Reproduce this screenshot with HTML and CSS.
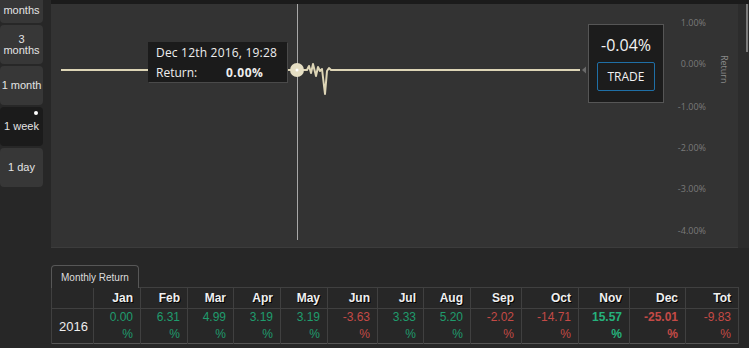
FILE: index.html
```html
<!DOCTYPE html>
<html lang="en">
<head>
  <meta charset="UTF-8">
  <title>Strategy Returns</title>
  <link rel="stylesheet" href="styles.css">
</head>
<body>

  <!-- Chart row: range buttons + chart panel -->
  <div class="top-row">
    <aside class="ranges">
      <div class="range-list">
        <button class="range-btn clipped">6<br>months</button>
        <button class="range-btn">3<br>months</button>
        <button class="range-btn">1 month</button>
        <button class="range-btn active">1 week</button>
        <button class="range-btn">1 day</button>
      </div>
    </aside>

    <div class="chart-area">
      <div class="chart-panel">
        <svg class="chart-svg" viewBox="51 4 687 244" width="687" height="244">
          <!-- crosshair -->
          <line x1="297.5" y1="4" x2="297.5" y2="240" stroke="#a8a8a8" stroke-width="1"/>
          <!-- return line -->
          <path d="M61 70 L307 70 L309 66 L311 73 L313 64 L316 76 L318 67 L320 71 L322 69 L325 94 L327 71 L329 68 L331 70 L580 70"
                fill="none" stroke="#ddd5b6" stroke-width="2" stroke-linejoin="round"/>
          <circle cx="297" cy="70" r="7" fill="#e6dfc4"/>
          <circle cx="297" cy="70" r="1.5" fill="#fff"/>
          <!-- last value marker -->
          <polygon points="582,70 586,66.5 586,73.5" fill="#6a6a6a"/>
          <!-- y axis -->
          <g class="axis-labels">
            <text x="706" y="26">1.00%</text>
            <text x="706" y="67">0.00%</text>
            <text x="706" y="110">-1.00%</text>
            <text x="706" y="151">-2.00%</text>
            <text x="706" y="192">-3.00%</text>
            <text x="706" y="234">-4.00%</text>
          </g>
          <text class="axis-title" transform="translate(721 55) rotate(90)">Return</text>
        </svg>

        <div class="chart-tooltip">
          <div class="tip-date">Dec 12th 2016, 19:28</div>
          <div class="tip-row"><span>Return:</span><b>0.00%</b></div>
        </div>

        <div class="price-box">
          <div class="price-value">-0.04%</div>
          <button class="trade-btn">TRADE</button>
        </div>
      </div>
      <div class="scroll-gutter"><div class="scroll-thumb"></div></div>
    </div>
  </div>

  <!-- Monthly return table -->
  <div class="returns">
    <div class="tabs">
      <div class="tab">Monthly Return</div>
    </div>
    <table class="returns-table">
      <colgroup>
        <col style="width:42px"><col style="width:47px"><col style="width:47px"><col style="width:46px">
        <col style="width:47px"><col style="width:47px"><col style="width:50px"><col style="width:46px">
        <col style="width:47px"><col style="width:51px"><col style="width:57px"><col style="width:51px">
        <col style="width:56px"><col style="width:53px">
      </colgroup>
      <thead>
        <tr>
          <th></th><th>Jan</th><th>Feb</th><th>Mar</th><th>Apr</th><th>May</th><th>Jun</th>
          <th>Jul</th><th>Aug</th><th>Sep</th><th>Oct</th><th>Nov</th><th>Dec</th><th>Tot</th>
        </tr>
      </thead>
      <tbody>
        <tr>
          <td class="year">2016</td>
          <td class="pos">0.00<br>%</td>
          <td class="pos">6.31<br>%</td>
          <td class="pos">4.99<br>%</td>
          <td class="pos">3.19<br>%</td>
          <td class="pos">3.19<br>%</td>
          <td class="neg">-3.63<br>%</td>
          <td class="pos">3.33<br>%</td>
          <td class="pos">5.20<br>%</td>
          <td class="neg">-2.02<br>%</td>
          <td class="neg">-14.71<br>%</td>
          <td class="pos best">15.57<br>%</td>
          <td class="neg worst">-25.01<br>%</td>
          <td class="neg">-9.83<br>%</td>
        </tr>
      </tbody>
    </table>
  </div>

</body>
</html>
```

FILE: styles.css
```css
/* Page */
body {
  margin: 0;
  background-color: #272727;
  font-family: "Liberation Sans", Arial, sans-serif;
  color: #e6e6e6;
  overflow: hidden;
}

/* Top row: range buttons and chart */
.top-row {
  display: flex;
  height: 248px;
}

.ranges {
  width: 43px;
  margin-right: 8px;
  overflow: hidden;
}

.range-list {
  display: flex;
  flex-direction: column;
  gap: 2px;
  margin-top: -16px;
}

.range-btn {
  height: 39px;
  padding: 0;
  border: none;
  border-radius: 4px;
  background-color: #373737;
  color: #e4e4e4;
  font-family: "Liberation Sans", Arial, sans-serif;
  font-size: 11px;
  line-height: 11px;
  position: relative;
}

/* first button is scrolled half out of view */
.range-btn.clipped {
  line-height: 16px;
  padding-bottom: 4px;
}

.range-btn.active {
  background-color: #1b1b1b;
}

.range-btn.active::after {
  content: "";
  position: absolute;
  top: 4px;
  right: 5px;
  width: 4px;
  height: 4px;
  border-radius: 50%;
  background-color: #fff;
}

/* Chart */
.chart-area {
  flex: 1;
  display: flex;
  border-top: 4px solid #1b1b1b;
}

.chart-panel {
  position: relative;
  width: 687px;
  height: 244px;
  background-color: #333333;
  box-shadow: inset 0 -1px 0 #3c3c3c;
}

.chart-svg {
  display: block;
}

.axis-labels text {
  font-family: "Open Sans", sans-serif;
  font-size: 9px;
  fill: #7a7a7a;
  text-anchor: end;
}

.axis-title {
  font-family: "Open Sans", sans-serif;
  font-size: 9px;
  fill: #8a8a8a;
}

.scroll-gutter {
  flex: 1;
  background-color: #2c2c2c;
  display: flex;
  justify-content: flex-end;
  padding-right: 1px;
}

.scroll-thumb {
  width: 2px;
  height: 48px;
  background-color: #7c7c7c;
}

/* Tooltip over the crosshair */
.chart-tooltip {
  position: absolute;
  left: 97px;
  top: 38px;
  width: 131px;
  height: 39px;
  padding: 1px 0 0 8px;
  background-color: #1b1b1b;
  box-shadow: 1px 1px 0 #4a4a4a;
  font-family: "Open Sans", sans-serif;
  font-size: 12px;
  color: #eee;
}

.tip-date {
  line-height: 19px;
  letter-spacing: 0.2px;
}

.tip-row {
  display: flex;
  line-height: 21px;
}

.tip-row span {
  width: 70px;
}

.tip-row b {
  font-weight: bold;
  letter-spacing: 0.5px;
}

/* Current value box */
.price-box {
  position: absolute;
  left: 537px;
  top: 20px;
  width: 74px;
  height: 77px;
  border: 1px solid #565656;
  background-color: #1c1c1c;
  display: flex;
  flex-direction: column;
  align-items: center;
}

.price-value {
  margin-top: 9px;
  font-family: "Open Sans", sans-serif;
  font-size: 16px;
  color: #f2f2f2;
}

.trade-btn {
  margin-top: 6px;
  width: 58px;
  height: 29px;
  padding: 0;
  border: 1px solid #1f6fa6;
  border-radius: 2px;
  background-color: #1c1c1c;
  color: #f2f2f2;
  font-family: "Open Sans", sans-serif;
  font-size: 12px;
}

/* Monthly returns */
.returns {
  margin: 17px 0 0 51px;
  width: 687px;
}

.tabs {
  display: flex;
}

.tab {
  height: 22px;
  padding: 0 9px;
  margin-bottom: -1px;
  border: 1px solid #575757;
  border-bottom: none;
  border-radius: 4px 4px 0 0;
  background-color: #272727;
  font-size: 10px;
  line-height: 23px;
  color: #ddd;
  position: relative;
}

.returns-table {
  width: 687px;
  table-layout: fixed;
  border-collapse: collapse;
  border: 1px solid #575757;
}

.returns-table th,
.returns-table td {
  border: 1px solid #404040;
  text-align: right;
  padding: 0 7px 0 0;
  font-size: 12px;
}

.returns-table th {
  height: 20px;
  font-weight: bold;
  color: #f0f0f0;
  text-shadow: 1px 1px 0 #000;
}

.returns-table td {
  height: 34px;
  line-height: 17px;
  border-bottom: 1px dotted #6a6a6a;
}

.returns-table td.year {
  text-align: center;
  padding: 0 0 0 2px;
  font-size: 13px;
  color: #eee;
}

.pos {
  color: #1f9c6d;
}

.neg {
  color: #c44a46;
}

.best {
  font-weight: bold;
  color: #25b27c;
}

.worst {
  font-weight: bold;
}
```
